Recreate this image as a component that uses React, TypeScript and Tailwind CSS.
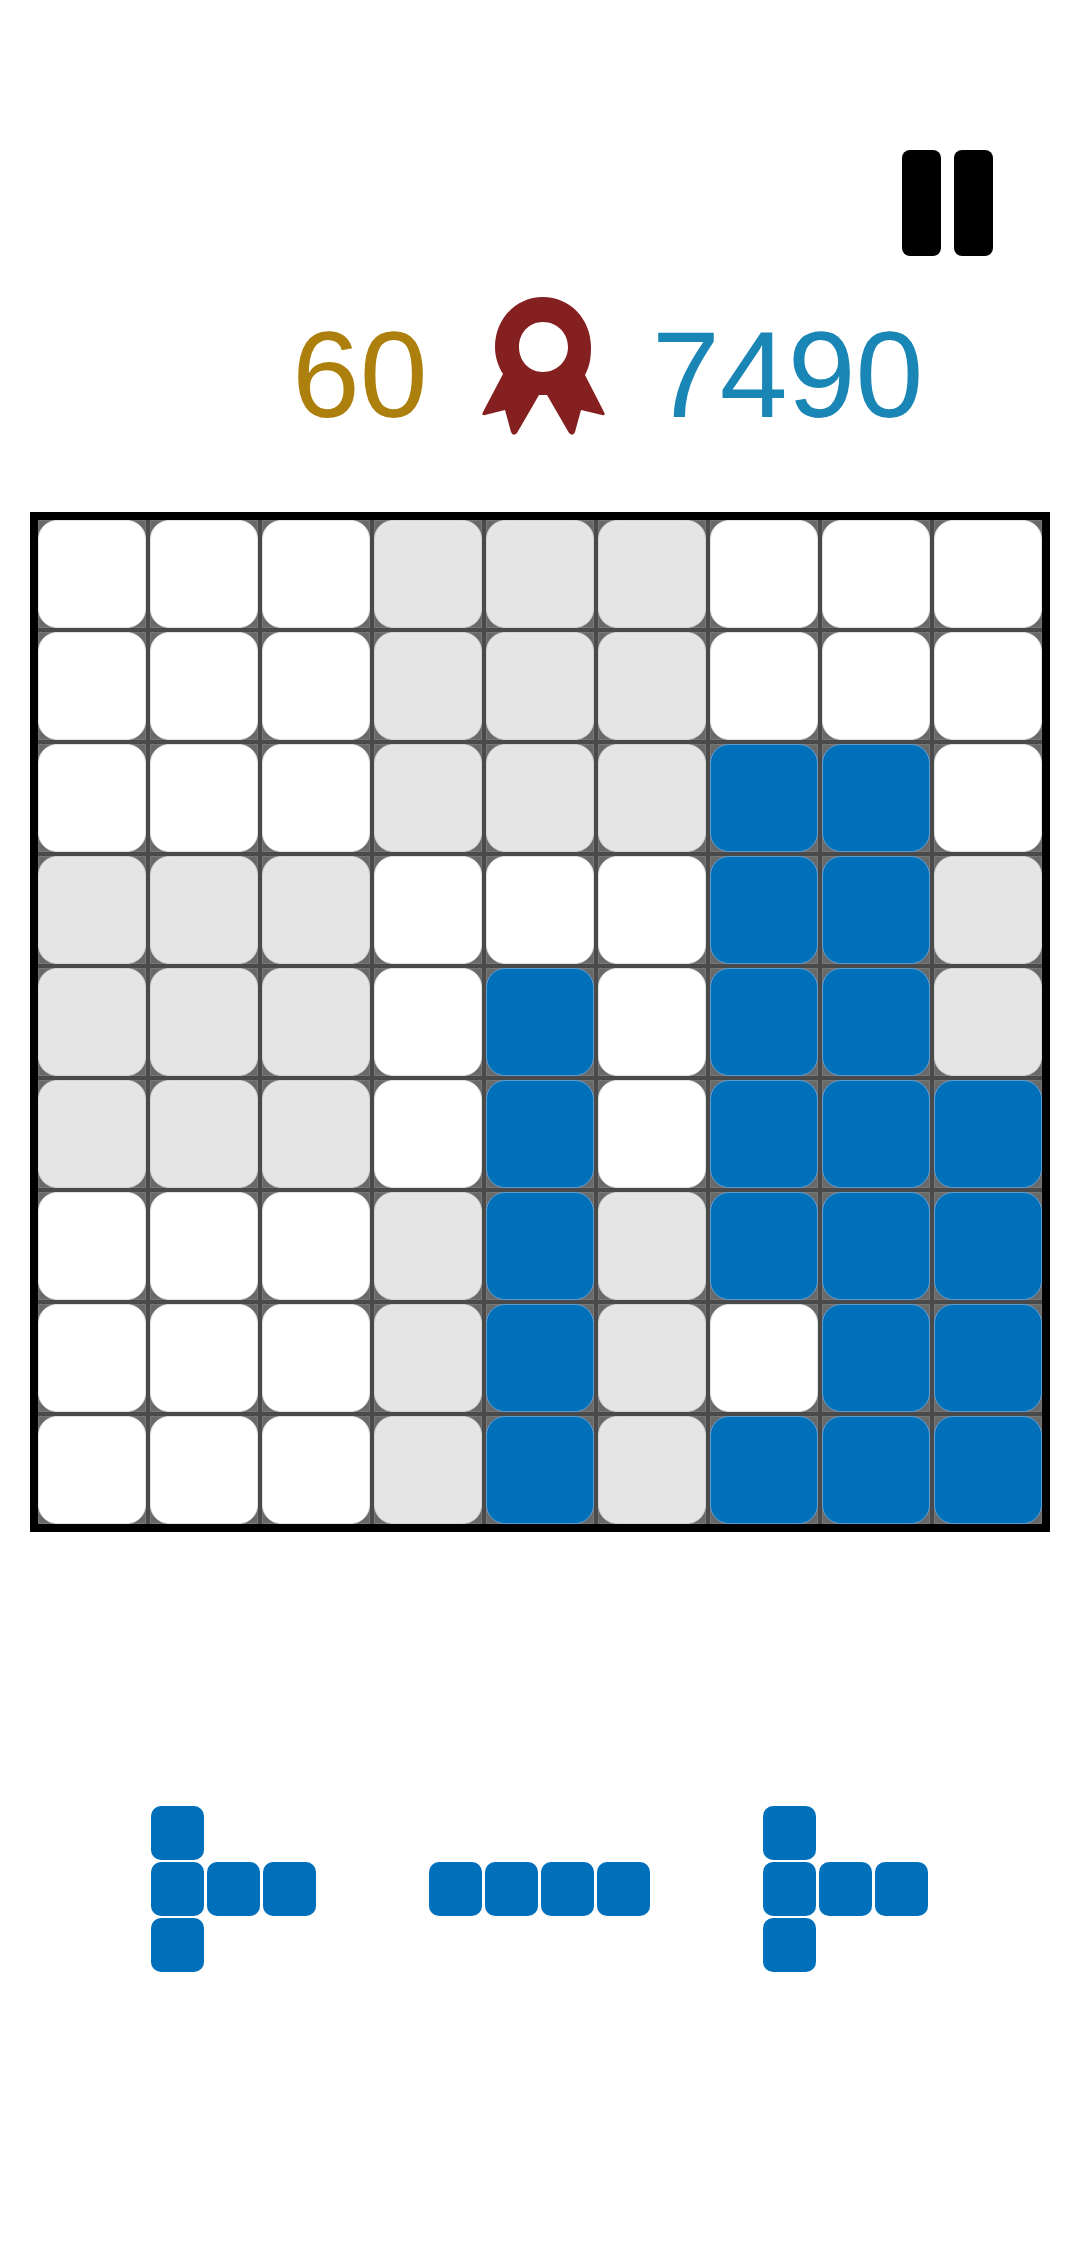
const board = [
  "WWWGGGWWW",
  "WWWGGGWWW",
  "WWWGGGBBW",
  "GGGWWWBBG",
  "GGGWBWBBG",
  "GGGWBWBBB",
  "WWWGBGBBB",
  "WWWGBGWBB",
  "WWWGBGBBB",
];

const pieces = [
  ["B..", "BBB", "B.."],
  ["....", "BBBB", "...."],
  ["B..", "BBB", "B.."],
];

function Tile({ kind }: { kind: string }) {
  return (
    <div className="h-[108px] w-[108px] bg-[#696969] shadow-[inset_0_0_0_1px_#777]">
      {kind === "W" && <div className="h-full w-full rounded-[19px] border border-[#e4e4e4] bg-white" />}
      {kind === "G" && <div className="h-full w-full rounded-[19px] border border-[#d6d6d6] bg-[#e5e5e5]" />}
      {kind === "B" && <div className="h-full w-full rounded-[19px] border border-[#5f9fd0] bg-[#0070bb]" />}
    </div>
  );
}

function Piece({ rows }: { rows: string[] }) {
  return (
    <div className="flex flex-col gap-[2px]">
      {rows.map((row, r) => (
        <div key={r} className="flex gap-[3px]">
          {row.split("").map((c, i) =>
            c === "B" ? (
              <div key={i} className="h-[54px] w-[53px] rounded-[10px] bg-[#0070bb]" />
            ) : (
              <div key={i} className="h-[54px] w-[53px]" />
            ),
          )}
        </div>
      ))}
    </div>
  );
}

export default function App() {
  return (
    <div className="h-[2248px] w-[1080px] overflow-hidden bg-white font-['Liberation_Sans',sans-serif]">
      {/* Pause */}
      <div className="flex justify-end gap-[13px] pr-[87px] pt-[150px]">
        <div className="h-[106px] w-[39px] rounded-[8px] bg-black" />
        <div className="h-[106px] w-[39px] rounded-[8px] bg-black" />
      </div>

      {/* Score row */}
      <div className="mt-[41px] flex h-[137px] items-start pl-[292px]">
        <span className="mt-[17px] w-[188px] text-[122px] leading-[122px] text-[#ad800d]">60</span>
        <svg width="128" height="140" viewBox="0 0 128 140" className="shrink-0">
          <path
            fill="#852020"
            fillRule="evenodd"
            d="M63 0C36 0 15 22 15 50C15 60 18 69 23 77L3 115Q1 119 5 118L25 113L31 135Q33 140 37 136L59 98H67L89 136Q93 140 95 135L101 113L122 118Q126 119 124 115L105 78C110 69 111 60 111 50C111 22 90 0 63 0ZM63 25C77 25 88 36 88 50C88 64 77 75 63 75C49 75 39 64 39 50C39 36 49 25 63 25Z"
          />
        </svg>
        <span className="ml-[44px] mt-[17px] text-[122px] leading-[122px] text-[#1a86b6]">7490</span>
      </div>

      {/* Board */}
      <div className="ml-[30px] mt-[78px] w-[1020px] border-[8px] border-black bg-[#4a4a4a]">
        <div className="grid grid-cols-[repeat(9,108px)] gap-[4px]">
          {board.flatMap((row, r) =>
            row.split("").map((c, i) => <Tile key={`${r}-${i}`} kind={c} />),
          )}
        </div>
      </div>

      {/* Pieces */}
      <div className="mt-[274px] flex gap-[113px] pl-[151px]">
        {pieces.map((rows, i) => (
          <Piece key={i} rows={rows} />
        ))}
      </div>
    </div>
  );
}
